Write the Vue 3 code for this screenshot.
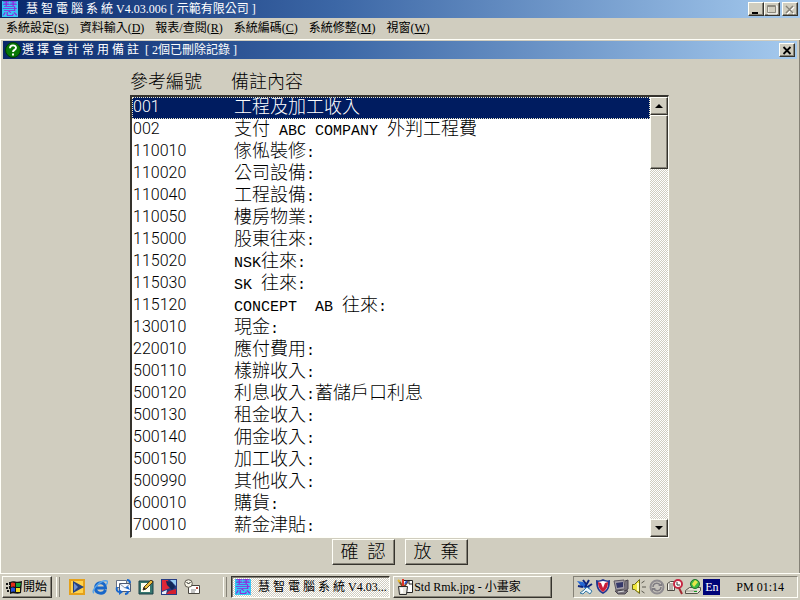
<script setup>
import { ref } from 'vue'

const menus = [
  { label: '系統設定', key: 'S' },
  { label: '資料輸入', key: 'D' },
  { label: '報表/查閱', key: 'R' },
  { label: '系統編碼', key: 'C' },
  { label: '系統修整', key: 'M' },
  { label: '視窗', key: 'W' },
]

const records = [
  ['001', '工程及加工收入'],
  ['002', '支付 ABC COMPANY 外判工程費'],
  ['110010', '傢俬裝修:'],
  ['110020', '公司設備:'],
  ['110040', '工程設備:'],
  ['110050', '樓房物業:'],
  ['115000', '股東往來:'],
  ['115020', 'NSK往來:'],
  ['115030', 'SK 往來:'],
  ['115120', 'CONCEPT  AB 往來:'],
  ['130010', '現金:'],
  ['220010', '應付費用:'],
  ['500110', '樣辦收入:'],
  ['500120', '利息收入:蓄儲戶口利息'],
  ['500130', '租金收入:'],
  ['500140', '佣金收入:'],
  ['500150', '加工收入:'],
  ['500990', '其他收入:'],
  ['600010', '購貨:'],
  ['700010', '薪金津貼:'],
].map(([code, text]) => ({
  code,
  parts: text
    .split(/([\x20-\x7e]+)/)
    .filter(Boolean)
    .map((value) => ({ value, latin: /^[\x20-\x7e]/.test(value) })),
}))

const selected = ref('001')
</script>

<template>
  <div class="desktop">
    <header class="title-bar">
      <span class="logo">慧</span>
      <h1 class="title">慧 智 電 腦 系 統 V4.03.006 [ 示範有限公司 ]</h1>
      <div class="window-buttons">
        <button class="box" type="button">
          <svg viewBox="0 0 12 11"><path d="M2 8h6v2H2z" fill="#000" /></svg>
        </button>
        <button class="box" type="button">
          <svg viewBox="0 0 12 11">
            <path d="M2 2h9v8H2z" fill="none" stroke="#fff" />
            <path d="M1.500 1.500h8v7h-8zM1 2.500h9" fill="none" stroke="#8c897e" />
          </svg>
        </button>
        <button class="box close" type="button">
          <svg viewBox="0 0 12 11">
            <path d="M3 3l7 7M10 3l-7 7" stroke="#fff" stroke-width="1.500" />
            <path d="M2 2l7 7M9 2l-7 7" stroke="#858277" stroke-width="1.500" />
          </svg>
        </button>
      </div>
    </header>

    <nav class="menu-bar">
      <a v-for="m in menus" :key="m.key" href="#">{{ m.label }}(<u>{{ m.key }}</u>)</a>
    </nav>

    <main class="child-window">
      <header class="title-bar child-title">
        <svg class="help" viewBox="0 0 16 16">
          <circle cx="8" cy="8" r="7.500" fill="#087808" stroke="#023a05" />
          <path d="M5 6.200C5 2.500 11 2.500 11 5.800C11 8 8 7.800 8 10" fill="none" stroke="#fff" stroke-width="1.900" />
          <path d="M7 11.500h2v2H7z" fill="#fff" />
        </svg>
        <h2 class="title">選 擇 會 計 常 用 備 註&nbsp; [ 2個已刪除記錄 ]</h2>
        <div class="window-buttons">
          <button class="box close" type="button">
            <svg viewBox="0 0 12 11"><path d="M2.500 2l7 7M9.500 2l-7 7" stroke="#000" stroke-width="1.800" /></svg>
          </button>
        </div>
      </header>

      <section class="picker">
        <div class="list">
          <table>
            <thead>
              <tr><th>參考編號</th><th>備註內容</th></tr>
            </thead>
            <tbody>
              <tr
                v-for="r in records"
                :key="r.code"
                :class="{ selected: r.code === selected }"
                @click="selected = r.code"
              >
                <td class="code">{{ r.code }}</td>
                <td><span v-for="(p, i) in r.parts" :key="i" :class="{ latin: p.latin }">{{ p.value }}</span></td>
              </tr>
            </tbody>
          </table>
          <div class="scrollbar">
            <button class="box" type="button">
              <svg viewBox="0 0 14 14"><path d="M7 5l4 4H3z" fill="#000" /></svg>
            </button>
            <div class="box thumb"></div>
            <button class="box arrow-down" type="button">
              <svg viewBox="0 0 14 14"><path d="M3 5h8l-4 4z" fill="#000" /></svg>
            </button>
          </div>
        </div>
        <div class="actions">
          <button class="box" type="button">確&nbsp; 認</button>
          <button class="box" type="button">放&nbsp; 棄</button>
        </div>
      </section>
    </main>

    <footer class="taskbar">
      <button class="box start" type="button">
        <svg class="icon" viewBox="0 0 16 16">
          <path d="M0 4h2v2H0zM0 8h2v2H0zM1 11h2v2H1zM3 3h1v3H3zM3 7h1v3H3z" fill="#151515" />
          <path d="M4 3c4-2 6 1 12-1l-1 12c-5 2-7-1-11 1z" fill="#111" />
          <path d="M5 4c2-1 3 0 4 0v4c-2-1-3 0-4 0z" fill="#e22b17" />
          <path d="M10 4h5l-1 4h-4z" fill="#18a038" />
          <path d="M5 9c2-1 3 0 4 0v4c-2-1-3 0-4 0z" fill="#2251d8" />
          <path d="M10 9h4v4h-4z" fill="#f4d824" />
        </svg>
        <span>開始</span>
      </button>
      <span class="grip"></span>
      <div class="quick">
        <svg class="icon" viewBox="0 0 16 16">
          <path d="M1 1h14v14H1z" fill="#ffd34d" stroke="#e5a11a" stroke-width="2" />
          <path d="M4 2l11 6-11 6z" fill="#26427e" /><path d="M5 4l4 4-4 4z" fill="#6f91cf" />
        </svg>
        <svg class="icon" viewBox="0 0 16 16">
          <path d="M13.500 11c-2 5-10 4-10-2 0-7 10-7 10 0H5" fill="none" stroke="#1767c9" stroke-width="3" />
          <path d="M2 14C-2 12 9 0 15 2c1 1 0 3-1 4" fill="none" stroke="#57a5ed" stroke-width="1.400" />
        </svg>
        <svg class="icon" viewBox="0 0 16 16">
          <path d="M1.500 1.500h10v7h-10z" fill="#fff" stroke="#687183" />
          <path d="M4.500 4.500h11v8h-11z" fill="#f6f8ff" stroke="#4b5874" />
          <path d="M5 5l5 4L15 5" fill="none" stroke="#8993a5" />
          <path d="M2 8c-1 3 0 5 3 5M10 15c2 0 3-1 3-3M12 1c2 0 3 1 3 3" fill="none" stroke="#1866ce" stroke-width="2" />
          <path d="M4 10l4 3-4 3zM10 9l3-2 2 4z" fill="#1866ce" />
        </svg>
        <svg class="icon" viewBox="0 0 16 16">
          <path d="M1 2h14v13H1z" fill="#37776f" stroke="#193f46" />
          <path d="M3 4h9v9H3z" fill="#fffef0" />
          <path d="M5 11l1-3 7-7 2 2-7 7z" fill="#e8bd3d" stroke="#523a17" />
          <path d="M5 11l1-3 2 2z" fill="#222" />
        </svg>
        <svg class="icon" viewBox="0 0 16 16">
          <path d="M0 0h16v16H0z" fill="#263c83" /><path d="M1 1h6l2 8-8 3z" fill="#df2638" />
          <path d="M9 1h6v6z" fill="#96cdf4" /><path d="M5 2l6 1 3 5-3 3-5-5z" fill="#112858" />
          <path d="M8 12l7-2v5H5z" fill="#d41f2f" /><path d="M1 13l5-2-1 4H1z" fill="#e7edf9" />
        </svg>
        <svg class="icon" viewBox="0 0 16 16">
          <path d="M4.500 6.500h11v8h-11z" fill="#fff" stroke="#48453e" />
          <path d="M7 11h5M7 13h4" stroke="#888" /><path d="M12 8h2v2h-2z" fill="#b64236" />
          <circle cx="4.500" cy="4.500" r="3.800" fill="#f7f5e8" stroke="#5c574d" />
          <path d="M2.500 3l2 2 2-2" fill="none" stroke="#222" />
        </svg>
      </div>
      <span class="grip"></span>
      <div class="tasks">
        <button class="box task active" type="button">
          <span class="logo">慧</span><span>慧 智 電 腦 系 統 V4.03...</span>
        </button>
        <button class="box task" type="button">
          <svg class="icon" viewBox="0 0 16 16">
            <path d="M6.500 1.500h9v12h-9z" fill="#fff" stroke="#222" /><path d="M12 2v3h3" fill="none" stroke="#222" />
            <path d="M2 2l4 6M11 2L7 8" stroke="#7b4d25" stroke-width="2" /><path d="M6 0v7" stroke="#df3225" stroke-width="2" />
            <path d="M1 1l2 2" stroke="#e6bc2c" stroke-width="2" /><path d="M10 2l-2 3" stroke="#3159c9" stroke-width="2" />
            <path d="M1.500 7.500h9l-1 8h-7z" fill="#e9e7df" stroke="#292929" /><path d="M3 9h3v5H4z" fill="#fff" />
          </svg>
          <span>Std Rmk.jpg - 小畫家</span>
        </button>
      </div>
      <div class="tray">
        <svg class="icon" viewBox="0 0 16 16">
          <path d="M0 2l6 1 7 6-2 2-7-4z" fill="#2468d5" /><path d="M1 7l5 1M6 1l3 4" stroke="#0c257d" stroke-width="2" />
          <path d="M12 1l-4 7M15 5l-6 4" stroke="#0c257d" stroke-width="2" />
          <path d="M3 14l4-3 3-3 5 4-2 3-4-3-3 3z" fill="#e9f6ff" stroke="#397aa4" />
        </svg>
        <svg class="icon" viewBox="0 0 16 16">
          <path d="M1 1c3 1 5 0 7-1 2 1 4 2 7 1 0 7-1 11-7 14C2 12 1 8 1 1z" fill="#22368f" />
          <path d="M3 3l5-1 5 1c0 5-1 8-5 10-4-2-5-5-5-10z" fill="#fff" />
          <path d="M3 3l3 1 2 5 2-5 3-1c0 5-2 8-5 10-3-2-5-5-5-10z" fill="#c81c39" />
        </svg>
        <svg class="icon" viewBox="0 0 16 16">
          <path d="M1 2l10-1 1 9-9 1z" fill="#a49fa9" stroke="#5c5761" /><path d="M3 4l7-1v5l-6 1z" fill="#343869" />
          <path d="M12 2l3-1v9l-3 2M2 12l9-1 4 1-3 3H5z" fill="#77727c" stroke="#4a454e" /><path d="M5 13l6-1" stroke="#ddd" />
        </svg>
        <svg class="icon" viewBox="0 0 16 16">
          <path d="M1.500 5.500h2l5-5v14l-5-4h-2z" fill="#f1e93c" stroke="#69651b" /><path d="M6 4h2v8H6z" fill="#fffdb8" />
          <path d="M10.500 4l3-2M11 8h4M10.500 12l3 2" stroke="#5b594f" />
        </svg>
        <svg class="icon" viewBox="0 0 16 16">
          <circle cx="8" cy="8" r="6.500" fill="#c6c3bc" stroke="#8f8c90" stroke-width="2" />
          <path d="M4 8c0-4 5-5 7-2M12 8c0 4-5 5-7 2" fill="none" stroke="#7f7c82" stroke-width="1.500" />
          <path d="M9 7h4V4zM7 9H3v3z" fill="#7f7c82" />
        </svg>
        <svg class="icon" viewBox="0 0 16 16">
          <path d="M0.500 4.500l3-2h4v9h-7z" fill="#f7f6ef" stroke="#4d4a44" /><path d="M3 4v7M5 4v7" stroke="#77736a" />
          <circle cx="11" cy="5" r="4" fill="#fff" stroke="#c52843" stroke-width="2" />
          <path d="M10 3v3h3" fill="none" stroke="#333" /><path d="M12 9l3 6" stroke="#a32932" stroke-width="2" />
        </svg>
        <svg class="icon" viewBox="0 0 16 16">
          <path d="M0.500 11.500l4-3h11v3l-3 3h-12z" fill="#e5e2d6" stroke="#555149" />
          <circle cx="10" cy="5" r="4.500" fill="#3eb844" stroke="#22722c" />
          <path d="M10 1l3 2-4 5-2-3z" fill="#e7e64b" /><path d="M1 12h11" stroke="#a09c8e" /><path d="M9 12h3v1H9z" fill="#149c24" />
        </svg>
        <span class="lang">En</span>
        <time class="clock">PM 01:14</time>
      </div>
    </footer>
  </div>
</template>

<style>
body {
  margin: 0;
  background: #d0cdbf;
}
</style>

<style scoped>
.desktop {
  --face: #d0cdbf;
  --light: #fffff8;
  --shade: #858277;
  --dark: #35332d;
  --navy: #001c60;
  display: flex;
  flex-direction: column;
  min-height: 100vh;
  box-sizing: border-box;
  background: var(--face);
  color: #000;
  font: 12px/16px "Liberation Serif", "Noto Sans CJK TC", serif;
}

button {
  font: inherit;
  color: inherit;
  margin: 0;
  padding: 0;
}

svg {
  display: block;
}

.box {
  box-sizing: border-box;
  background: var(--face);
  border: 1px solid;
  border-color: var(--light) var(--dark) var(--dark) var(--light);
  box-shadow: inset -1px -1px var(--shade);
}

.title-bar {
  display: flex;
  align-items: center;
  height: 18px;
  padding: 0 2px;
  color: #fff;
  background: linear-gradient(90deg, #08276b, #3c67a6 42%, #a5caee);
}

.title {
  flex: 1;
  margin: 0;
  font-size: 12px;
  font-weight: 400;
  white-space: nowrap;
}

.title-bar > .logo {
  margin-right: 8px;
}

.logo {
  flex: none;
  width: 16px;
  height: 16px;
  overflow: hidden;
  background: #35c8f5;
  color: #8d2bdc;
  font-size: 16px;
  line-height: 16px;
  text-align: center;
}

.window-buttons {
  display: flex;
}

.window-buttons .box {
  width: 16px;
  height: 14px;
}

.window-buttons svg {
  width: 12px;
  height: 11px;
  margin: 0 1px;
}

.window-buttons .close:not(:first-child) {
  margin-left: 2px;
}

.menu-bar {
  display: flex;
  gap: 11px;
  height: 21px;
  padding: 0 6px;
  line-height: 20px;
  border-bottom: 1px solid var(--light);
}

.menu-bar a {
  color: inherit;
  text-decoration: none;
  white-space: nowrap;
}

.child-window {
  flex: 1;
  display: flex;
  flex-direction: column;
  padding: 1px 2px 0;
  border-left: 1px solid var(--light);
  border-right: 1px solid var(--shade);
}

.help {
  width: 16px;
  height: 16px;
  margin-right: 1px;
}

.picker {
  flex: 1;
  display: flex;
  flex-direction: column;
  align-items: center;
  padding: 12px 17px 4px 16px;
}

.list {
  display: grid;
  grid-template-columns: 1fr 19px;
  width: 100%;
  max-width: 539px;
  font-size: 18px;
  line-height: 22px;
}

table,
thead,
tbody {
  display: block;
}

tr {
  display: grid;
  grid-template-columns: 101px 1fr;
}

th,
td {
  padding: 0;
  font-weight: 300;
  text-align: left;
  white-space: pre;
}

thead {
  height: 24px;
}

tbody {
  border: solid var(--dark);
  border-width: 2px 0 0 2px;
  border-bottom: 1px solid var(--light);
  background: #fff;
}

tbody tr {
  height: 22px;
  padding-left: 1px;
}

td {
  line-height: 20px;
}

.selected {
  background: var(--navy);
  color: #fff;
  outline: 1px dotted #e8e5c8;
  outline-offset: -1px;
}

.code {
  font-family: Roboto, "Liberation Sans", sans-serif;
  font-size: 16px;
}

.latin {
  font-family: "Liberation Mono", monospace;
  font-size: 15px;
}

.scrollbar {
  display: flex;
  flex-direction: column;
  margin-top: 24px;
  border-top: 2px solid var(--dark);
  border-right: 1px solid var(--light);
  border-bottom: 1px solid var(--light);
  background: repeating-conic-gradient(#fff 0 25%, var(--face) 0 50%) 0 0 / 2px 2px;
}

.scrollbar .box {
  width: 18px;
  height: 18px;
}

.scrollbar svg {
  width: 14px;
  height: 14px;
  margin: 0 1px;
}

.scrollbar .thumb {
  height: 54px;
}

.scrollbar .arrow-down {
  margin-top: auto;
}

.actions {
  display: flex;
  gap: 10px;
  margin-top: 1px;
}

.actions .box {
  width: 63px;
  height: 26px;
  font-size: 18px;
  line-height: 22px;
  font-weight: 300;
}

.taskbar {
  display: flex;
  align-items: center;
  height: 26px;
  padding: 0 2px;
  border-top: 1px solid var(--light);
}

.icon {
  flex: none;
  width: 16px;
  height: 16px;
}

.start {
  display: flex;
  align-items: center;
  gap: 1px;
  width: 50px;
  height: 22px;
  padding: 0 3px;
  white-space: nowrap;
}

.grip {
  width: 2px;
  height: 20px;
  margin: 0 4px;
  border-left: 1px solid var(--light);
  border-right: 1px solid var(--shade);
}

.quick {
  display: flex;
  gap: 7px;
  margin: 0 19px 0 5px;
}

.tasks {
  flex: 1;
  display: flex;
  gap: 3px;
  margin-right: 21px;
}

.task {
  flex: 0 1 160px;
  min-width: 0;
  display: flex;
  align-items: center;
  gap: 1px;
  height: 22px;
  padding: 0 3px;
  white-space: nowrap;
  overflow: hidden;
}

.task.active {
  gap: 7px;
  border-color: var(--dark) var(--light) var(--light) var(--dark);
  box-shadow: inset 1px 1px var(--shade);
  background: repeating-conic-gradient(#fff 0 25%, var(--face) 0 50%) 0 0 / 2px 2px;
}

.tray {
  display: flex;
  align-items: center;
  gap: 2px;
  height: 20px;
  padding: 0 13px 0 3px;
  border: 1px solid;
  border-color: var(--shade) var(--light) var(--light) var(--shade);
}

.lang {
  width: 17px;
  background: #000478;
  color: #fff;
  text-align: center;
}

.clock {
  margin-left: 14px;
  white-space: nowrap;
}
</style>
